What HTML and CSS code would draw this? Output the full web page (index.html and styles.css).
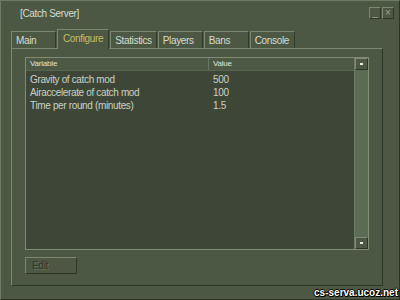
FILE: index.html
```html
<!DOCTYPE html>
<html lang="en">
<head>
    <meta charset="UTF-8">
    <title>Catch Server</title>
    <link rel="stylesheet" href="styles.css">
</head>
<body>

<div class="window">
    <div class="titlebar">
        <span class="title">[Catch Server]</span>
        <div class="winbtns">
            <span class="winbtn">_</span>
            <span class="winbtn">&#215;</span>
        </div>
    </div>

    <div class="tabs">
        <div class="tab">Main</div>
        <div class="tab active">Configure</div>
        <div class="tab">Statistics</div>
        <div class="tab">Players</div>
        <div class="tab">Bans</div>
        <div class="tab">Console</div>
    </div>

    <div class="panel">
        <div class="list">
            <div class="table">
                <div class="row head">
                    <div class="col-var">Variable</div>
                    <div class="col-val">Value</div>
                </div>
                <div class="rows">
                    <div class="row">
                        <div class="col-var">Gravity of catch mod</div>
                        <div class="col-val">500</div>
                    </div>
                    <div class="row">
                        <div class="col-var">Airaccelerate of catch mod</div>
                        <div class="col-val">100</div>
                    </div>
                    <div class="row">
                        <div class="col-var">Time per round (minutes)</div>
                        <div class="col-val">1.5</div>
                    </div>
                </div>
            </div>
            <div class="scrollbar">
                <div class="sbtn up"></div>
                <div class="track"></div>
                <div class="sbtn down"></div>
            </div>
        </div>
        <button type="button" class="editbtn" disabled>Edit</button>
    </div>

    <div class="watermark">cs-serva.ucoz.net</div>
</div>

</body>
</html>
```

FILE: styles.css
```css
body {
    margin: 0;
    width: 400px;
    height: 300px;
    overflow: hidden;
    font-family: "Liberation Sans", Arial, sans-serif;
    font-size: 10px;
    letter-spacing: -0.35px;
    color: #cbd2c4;
    background-color: #4c5844;
}

.window {
    position: relative;
    height: 300px;
    box-sizing: border-box;
    border: 1px solid #2c3326;
    border-top-color: #6e7b64;
    border-left-color: #6e7b64;
    background-color: #4c5844;
}

.titlebar {
    display: flex;
    justify-content: space-between;
    align-items: flex-start;
    height: 28px;
    padding: 6px 5px 0 19px;
    box-sizing: border-box;
}

.title {
    line-height: 14px;
    color: #d6dcd0;
}

.winbtns {
    display: flex;
    gap: 1px;
}

.winbtn {
    width: 12px;
    height: 12px;
    box-sizing: border-box;
    border: 1px solid #2f3629;
    border-top-color: #7c886f;
    border-left-color: #7c886f;
    color: #9aa38f;
    font-size: 10px;
    line-height: 9px;
    text-align: center;
    letter-spacing: 0;
}

/* tab strip */
.tabs {
    display: flex;
    align-items: flex-end;
    gap: 1px;
    height: 19px;
    margin-left: 10px;
}

.tab {
    height: 17px;
    min-width: 45px;
    padding: 0 4px;
    box-sizing: border-box;
    border: 1px solid #7b886f;
    border-right-color: #323a2c;
    border-bottom: none;
    line-height: 17px;
    color: #d6dcd0;
}

.tab.active {
    position: relative;
    height: 20px;
    margin-bottom: -1px;
    padding: 0 5px;
    line-height: 18px;
    color: #c6bd62;
    background-color: #4c5844;
}

.panel {
    height: 238px;
    margin: 0 16px 0 10px;
    padding: 8px 13px 0 13px;
    box-sizing: border-box;
    border: 1px solid #2e3529;
    border-top-color: #7b886f;
    border-left-color: #7b886f;
}

.list {
    display: flex;
    height: 193px;
    box-sizing: border-box;
    border: 1px solid #808c75;
    background-color: #3e4638;
}

.table {
    flex: 1;
}

.row {
    display: flex;
    height: 13px;
    line-height: 13px;
}

.row.head {
    height: 12px;
    line-height: 11px;
    font-size: 8px;
    letter-spacing: -0.2px;
    color: #e0e4dc;
    background-color: #4d5945;
    border-bottom: 1px solid #59664f;
}

.row.head .col-var {
    border-right: 1px solid #6b7861;
}

.rows {
    padding-top: 2px;
}

.col-var {
    width: 183px;
    padding-left: 4px;
    box-sizing: border-box;
}

.col-val {
    padding-left: 4px;
}

.scrollbar {
    display: flex;
    flex-direction: column;
    width: 13px;
    background-color: #5c6c54;
    border-left: 1px solid #6d7d63;
}

.sbtn {
    height: 12px;
    box-sizing: border-box;
    border: 1px solid #2f3629;
    border-top-color: #7e8a72;
    border-left-color: #7e8a72;
    background-color: #4c5844;
    display: flex;
    align-items: center;
    justify-content: center;
}

.sbtn::after {
    content: "";
    width: 3px;
    height: 2px;
    background-color: #e6eae2;
}

.track {
    flex: 1;
}

.editbtn {
    display: block;
    width: 52px;
    height: 17px;
    margin-top: 7px;
    padding: 0 0 0 6px;
    text-align: left;
    font-family: inherit;
    font-size: 10px;
    letter-spacing: -0.3px;
    color: #2f362a;
    text-shadow: 1px 1px 0 #64715a;
    background-color: #4c5844;
    border: 1px solid #2f3629;
    border-top-color: #7c886f;
    border-left-color: #7c886f;
}

.watermark {
    position: absolute;
    right: 1px;
    bottom: 1px;
    font-size: 10px;
    font-weight: bold;
    letter-spacing: 0;
    color: #ffffff;
    text-shadow: 1px 0 #000, -1px 0 #000, 0 1px #000, 0 -1px #000, 1px 1px #000;
}
```
